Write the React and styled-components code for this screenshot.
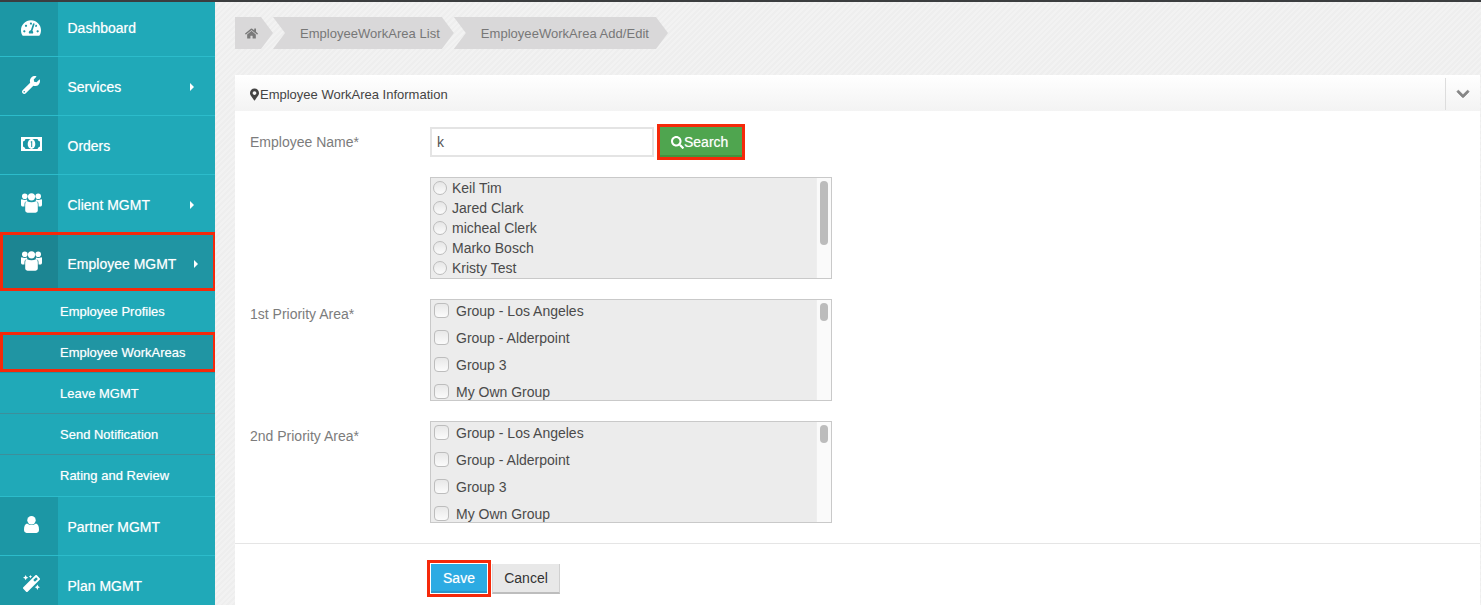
import React from "react";
import styled, { createGlobalStyle } from "styled-components";
import {
  FaChevronDown,
  FaHome,
  FaMagic,
  FaMapMarkerAlt,
  FaSearch,
  FaTachometerAlt,
  FaWrench,
} from "react-icons/fa";

const GlobalStyle = createGlobalStyle`
  html, body {
    margin: 0;
    height: 100%;
    overflow: hidden;
  }
  body {
    font-family: "Liberation Sans", Arial, sans-serif;
    font-size: 14px;
  }
  * { box-sizing: border-box; }
`;

const Page = styled.div`
  display: flex;
  flex-direction: column;
  height: 605px;
  overflow: hidden;
`;

const TopBar = styled.div`
  height: 2px;
  flex-shrink: 0;
  background: #3b3d3f;
`;

const Columns = styled.div`
  display: flex;
  flex: 1;
  min-height: 0;
`;

const Sidebar = styled.nav`
  width: 215px;
  flex-shrink: 0;
  overflow: hidden;
  background: #20a9b8;
`;

const NavItem = styled.div`
  position: relative;
  display: flex;
  align-items: stretch;
  height: ${(p) => p.$height || 59}px;
  background: ${(p) => (p.$active ? "#2095a3" : "transparent")};
  border-bottom: ${(p) => (p.$active ? "0" : "1px solid #2cbccb")};
  color: #fff;
  text-shadow: 0 0 1px rgba(255, 255, 255, 0.55);
  &::after {
    content: "";
    display: ${(p) => (p.$active ? "block" : "none")};
    position: absolute;
    inset: -2px 0 0 0;
    border: 3px solid #f5290a;
    border-right-width: 2px;
  }
`;

const IconCell = styled.div`
  width: 58px;
  flex-shrink: 0;
  display: flex;
  align-items: center;
  justify-content: center;
  padding: 0 0 3px 4px;
  background: rgba(0, 0, 0, 0.1);
  font-size: 18px;
`;

const NavLabel = styled.div`
  flex: 1;
  display: flex;
  align-items: center;
  padding: ${(p) => (p.$lifted ? "0 0 3px 9.5px" : "2px 0 0 9.5px")};
  font-size: 14px;
`;

const Caret = styled.span`
  margin-left: auto;
  margin-right: ${(p) => (p.$active ? 17 : 21)}px;
  width: 0;
  height: 0;
  border-left: 4px solid #fff;
  border-top: 4px solid transparent;
  border-bottom: 4px solid transparent;
`;

const subLineColor = { dark: "#3d8f9b", light: "#2cbccb" };

const SubItem = styled.div`
  position: relative;
  display: flex;
  align-items: center;
  height: ${(p) => (p.$line === "light" ? 42 : 41)}px;
  padding: ${(p) => (p.$line === "light" ? "0 0 1px 60px" : "0 0 0 60px")};
  color: #fff;
  font-size: 13px;
  text-shadow: 0 0 1px rgba(255, 255, 255, 0.55);
  background: ${(p) => (p.$active ? "#2095a3" : "transparent")};
  border-bottom: 1px solid ${(p) => subLineColor[p.$line] || "transparent"};
  &::after {
    content: "";
    display: ${(p) => (p.$active ? "block" : "none")};
    position: absolute;
    inset: 0;
    border: 3px solid #f5290a;
    border-right-width: 2px;
  }
`;

const Main = styled.main`
  flex: 1;
  min-width: 0;
  display: flex;
  flex-direction: column;
  gap: 26px;
  padding: 15px 1px 0 20px;
  background: repeating-linear-gradient(135deg, #f2f2f2 0 2px, #eeeeee 2px 4px);
`;

const Crumbs = styled.div`
  display: flex;
  flex-shrink: 0;
  height: 32px;
`;

const Crumb = styled.div`
  display: flex;
  align-items: center;
  height: 32px;
  padding: 0 14px 0 27px;
  background: #d9d8d9;
  color: #777;
  font-size: 13px;
  letter-spacing: 0.03px;
  clip-path: polygon(0 0, calc(100% - 12px) 0, 100% 50%, calc(100% - 12px) 100%, 0 100%, 12px 50%);
  &:last-child {
    padding-right: 19px;
  }
`;

const HomeCrumb = styled(Crumb)`
  width: 38px;
  padding: 0 0 0 10px;
  clip-path: polygon(0 0, calc(100% - 12px) 0, 100% 50%, calc(100% - 12px) 100%, 0 100%);
  color: #7a7a7a;
  font-size: 13px;
`;

const Panel = styled.section`
  flex: 1;
  background: #fff;
`;

const PanelHeader = styled.header`
  display: flex;
  align-items: center;
  height: 36px;
  padding: 1px 0 0 15px;
  gap: 1px;
  background: linear-gradient(#ffffff, #f3f3f3);
  color: #444;
  font-size: 13px;
`;

const Marker = styled(FaMapMarkerAlt)`
  width: 9px;
  height: 13px;
  flex-shrink: 0;
  margin-top: 1px;
`;

const PanelTitle = styled.div`
  flex: 1;
  padding-top: 2px;
`;

const Collapse = styled.div`
  display: flex;
  align-items: center;
  justify-content: center;
  width: 35px;
  height: 32px;
  border-left: 1px solid #ddd;
  color: #858585;
  font-size: 14px;
  svg {
    stroke: currentColor;
    stroke-width: 30;
  }
`;

const FormGrid = styled.div`
  display: grid;
  grid-template-columns: 180px 1fr;
  gap: 20px 0;
  padding: 16px 15px 20px;
`;

const FieldLabel = styled.label`
  color: #7c7c7c;
  font-size: 14px;
  line-height: 30px;
`;

const SearchRow = styled.div`
  display: flex;
  gap: 6px;
`;

const TextInput = styled.input`
  width: 224px;
  height: 30px;
  padding: 0 5px;
  border: 2px solid #e4e4e4;
  background: #fff;
  color: #555;
  font-family: inherit;
  font-size: 14px;
  outline: none;
`;

const SearchButton = styled.button`
  display: flex;
  align-items: center;
  width: 82px;
  height: 30px;
  padding: 2px 0 0 11px;
  border: 0;
  border-bottom: 2px solid #43923f;
  background: #4fa54f;
  color: #fff;
  font-family: inherit;
  font-size: 14px;
  text-shadow: 0 0 1px rgba(255, 255, 255, 0.5);
  outline: 3px solid #f5290a;
  svg {
    flex-shrink: 0;
  }
`;

const ListBox = styled.div`
  display: flex;
  width: 402px;
  height: 102px;
  border: 1px solid #c9c9c9;
  background: #ececec;
  overflow: hidden;
`;

const ListBody = styled.div`
  flex: 1;
  display: flex;
  flex-direction: column;
  gap: ${(p) => (p.$check ? 5 : 0)}px;
  padding-left: ${(p) => (p.$check ? 3 : 2)}px;
`;

const OptionRow = styled.label`
  display: flex;
  flex-shrink: 0;
  align-items: center;
  gap: ${(p) => (p.$check ? 7 : 5)}px;
  height: ${(p) => (p.$check ? 22 : 20)}px;
  color: #4a4a4a;
  font-size: 14px;
`;

const Radio = styled.input.attrs({ type: "radio" })`
  appearance: none;
  width: 14px;
  height: 14px;
  margin: -1px 0 0;
  border: 1px solid #bdbdbd;
  border-radius: 50%;
  background: linear-gradient(#e6e6e6, #fbfbfb);
`;

const Check = styled.input.attrs({ type: "checkbox" })`
  appearance: none;
  width: 15px;
  height: 15px;
  margin: -1px 0 0;
  border: 1px solid #bdbdbd;
  border-radius: 4px;
  background: linear-gradient(#e8e8e8, #fbfbfb);
`;

const ScrollTrack = styled.div`
  width: 15px;
  flex-shrink: 0;
  padding: 3px 0 0 3px;
  background: #fafafa;
  border-left: 1px solid #eee;
`;

const ScrollThumb = styled.div`
  width: 8px;
  height: ${(p) => p.$size}px;
  border-radius: 4px;
  background: #bcbcbc;
`;

const FormFooter = styled.footer`
  display: flex;
  gap: 5px;
  padding: 20px 0 0 196px;
  border-top: 1px solid #e5e5e5;
`;

const SaveButton = styled.button`
  width: 56px;
  height: 29px;
  padding: 0;
  border: 0;
  border-bottom: 2px solid #2a95c9;
  background: #2cabe3;
  color: #fff;
  font-family: inherit;
  font-size: 14px;
  text-shadow: 0 0 1px rgba(255, 255, 255, 0.5);
  outline: 3px solid #f5290a;
  outline-offset: 1px;
`;

const CancelButton = styled.button`
  width: 68px;
  height: 30px;
  padding: 0;
  border: 0;
  border-left: 1px solid #d8d8d8;
  border-bottom: 2px solid #bdbdbd;
  border-right: 1px solid #d0d0d0;
  background: #e8e8e8;
  color: #333;
  font-family: inherit;
  font-size: 14px;
`;

function GroupIcon() {
  return (
    <svg width="21" height="20" viewBox="0 0 21 20" fill="#fff">
      <circle cx="3.8" cy="3.2" r="2.8" />
      <circle cx="17.2" cy="3.2" r="2.8" />
      <circle cx="10.5" cy="3.8" r="3.6" />
      <path d="M0.5 6.2 Q3.8 7.6 6 6.6 Q7 8.4 4 9 Q3.4 10 3.4 13.4 L1 13.4 Q0 13 0 11.8 V7 Q0 6.4 0.5 6.2 Z" />
      <path d="M20.5 6.2 Q17.2 7.6 15 6.6 Q14 8.4 17 9 Q17.6 10 17.6 13.4 L20 13.4 Q21 13 21 11.8 V7 Q21 6.4 20.5 6.2 Z" />
      <path d="M5.6 8 Q10.5 10.4 15.4 8 Q16.8 8.6 16.8 11.5 L16.8 17.6 Q16.8 19.6 14.5 19.8 L6.5 19.8 Q4.2 19.6 4.2 17.6 L4.2 11.5 Q4.2 8.6 5.6 8 Z" />
    </svg>
  );
}

function UserIcon() {
  return (
    <svg width="15" height="17" viewBox="0 0 15 17" fill="#fff">
      <circle cx="7.5" cy="4.2" r="4.2" />
      <path d="M3 7.4 Q7.5 10.4 12 7.4 Q15 8.4 15 13.6 Q15 16.8 12.4 17 H2.6 Q0 16.8 0 13.6 Q0 8.4 3 7.4 Z" />
    </svg>
  );
}

function MoneyIcon() {
  return (
    <svg width="21" height="14" viewBox="0 0 21 14">
      <path
        fill="#fff"
        fillRule="evenodd"
        d="M0 0H21V14H0Z M4.5 2 Q4 4 2 4.5 V9.5 Q4 10 4.5 12 H16.5 Q17 10 19 9.5 V4.5 Q17 4 16.5 2 Z"
      />
      <ellipse cx="10.5" cy="7" rx="3.8" ry="5" fill="#fff" />
      <path d="M9.7 4.6 L11.2 4 V10 H10.2 V5.4 L9.7 5.6 Z" fill="#1f95a3" />
    </svg>
  );
}

const radioNames = ["Keil Tim", "Jared Clark", "micheal Clerk", "Marko Bosch", "Kristy Test"];
const groupNames = ["Group - Los Angeles", "Group - Alderpoint", "Group 3", "My Own Group"];
const subItems = [
  { label: "Employee Profiles" },
  { label: "Employee WorkAreas", active: true },
  { label: "Leave MGMT", line: "dark" },
  { label: "Send Notification", line: "dark" },
  { label: "Rating and Review", line: "light" },
];

function MainNav({ icon, label, caret, active, height, lifted }) {
  return (
    <NavItem $active={active} $height={height}>
      <IconCell>{icon}</IconCell>
      <NavLabel $lifted={lifted}>
        {label}
        {caret && <Caret $active={active} />}
      </NavLabel>
    </NavItem>
  );
}

function CheckList({ name }) {
  return (
    <ListBox>
      <ListBody $check>
        {groupNames.map((group) => (
          <OptionRow $check key={group}>
            <Check name={name} />
            {group}
          </OptionRow>
        ))}
      </ListBody>
      <ScrollTrack>
        <ScrollThumb $size={18} />
      </ScrollTrack>
    </ListBox>
  );
}

export default function App() {
  return (
    <Page>
      <GlobalStyle />
      <TopBar />
      <Columns>
        <Sidebar>
          <MainNav icon={<FaTachometerAlt size={20} />} label="Dashboard" height={55} lifted />
          <MainNav icon={<FaWrench />} label="Services" caret />
          <MainNav icon={<MoneyIcon />} label="Orders" />
          <MainNav icon={<GroupIcon />} label="Client MGMT" caret />
          <MainNav icon={<GroupIcon />} label="Employee MGMT" caret active height={57} />
          {subItems.map((item) => (
            <SubItem key={item.label} $active={item.active} $line={item.line}>
              {item.label}
            </SubItem>
          ))}
          <MainNav icon={<UserIcon />} label="Partner MGMT" />
          <MainNav icon={<FaMagic size={17} />} label="Plan MGMT" />
        </Sidebar>
        <Main>
          <Crumbs>
            <HomeCrumb>
              <FaHome />
            </HomeCrumb>
            <Crumb>EmployeeWorkArea List</Crumb>
            <Crumb>EmployeeWorkArea Add/Edit</Crumb>
          </Crumbs>
          <Panel>
            <PanelHeader>
              <Marker />
              <PanelTitle>Employee WorkArea Information</PanelTitle>
              <Collapse>
                <FaChevronDown />
              </Collapse>
            </PanelHeader>
            <FormGrid>
              <FieldLabel>Employee Name*</FieldLabel>
              <SearchRow>
                <TextInput defaultValue="k" />
                <SearchButton>
                  <FaSearch size={13} />
                  Search
                </SearchButton>
              </SearchRow>
              <span />
              <ListBox>
                <ListBody>
                  {radioNames.map((person) => (
                    <OptionRow key={person}>
                      <Radio name="employee" />
                      {person}
                    </OptionRow>
                  ))}
                </ListBody>
                <ScrollTrack>
                  <ScrollThumb $size={64} />
                </ScrollTrack>
              </ListBox>
              <FieldLabel>1st Priority Area*</FieldLabel>
              <CheckList name="first" />
              <FieldLabel>2nd Priority Area*</FieldLabel>
              <CheckList name="second" />
            </FormGrid>
            <FormFooter>
              <SaveButton>Save</SaveButton>
              <CancelButton>Cancel</CancelButton>
            </FormFooter>
          </Panel>
        </Main>
      </Columns>
    </Page>
  );
}
